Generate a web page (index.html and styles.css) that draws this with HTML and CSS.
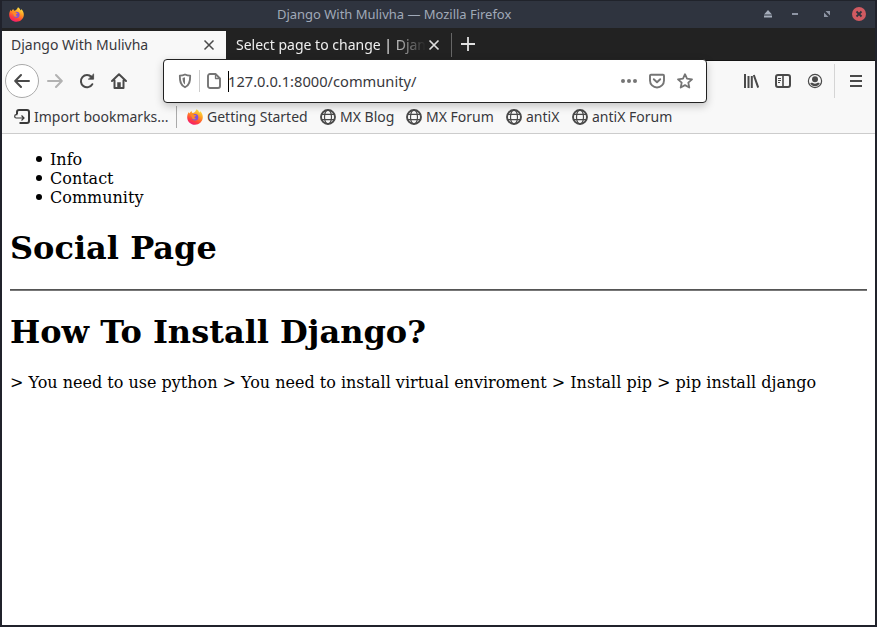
FILE: index.html
```
<!DOCTYPE html>
<html lang="en">
<head>
<meta charset="utf-8">
<title>Django With Mulivha</title>
<link rel="stylesheet" href="styles.css">
</head>
<body>
<svg class="defs" width="0" height="0">
  <defs>
    <linearGradient id="flame" x1="0.8" y1="0" x2="0.3" y2="1">
      <stop offset="0" stop-color="#fff04a"/><stop offset=".4" stop-color="#ff9a22"/><stop offset=".75" stop-color="#ff403c"/><stop offset="1" stop-color="#f01878"/>
    </linearGradient>
    <symbol id="firefox" viewBox="0 0 16 16">
      <path fill="url(#flame)" d="M9.6.3c1.700 1 2.300 2.100 2.600 3.200.8-.2.8-.9.700-1.500C14.900 3.500 16 6 15.800 8.600 15.500 12.800 12.200 15.800 8 15.800S.3 12.700.2 8.500C.1 6.300.9 4.200 2 3c0 .7.200 1.100.5 1.400.5-1 1.200-1.800 2.100-2.300 0 .9.400 1.600 1 2C8.300 3.600 8.800 1.700 9.600.3z"/>
      <circle cx="8" cy="8.300" r="3.300" fill="#8050dc"/>
      <path fill="#ff8b25" d="M3 5.400c1.700-.9 3.500-.5 4.600.6l1.700.3c-.2 1-1.600 1.100-1.900 1.900-.2.900.7 1.500 1.800 1-.8 1.800-4 1.500-4.400-.7C4.400 7.200 3.800 6 3 5.400z"/>
    </symbol>
    <symbol id="globe" viewBox="0 0 16 16">
      <g fill="none" stroke="#4a4a4a"><circle cx="8" cy="8" r="7" stroke-width="1.900"/><ellipse cx="8" cy="8" rx="3.500" ry="7" stroke-width="1.200"/><path stroke-width="1.200" d="M2 5.400h12M2 10.600h12"/></g>
    </symbol>
  </defs>
</svg>
<div class="window">
  <header class="titlebar">
    <svg class="logo" width="15" height="15"><use href="#firefox"/></svg>
    <span class="title">Django With Mulivha — Mozilla Firefox</span>
    <div class="controls">
      <svg width="10" height="8" viewBox="0 0 10 8" fill="#a6adbb"><path d="M5 0l4 4.500H1zM1 5.500h8v2H1z"/></svg>
      <svg width="8" height="8" viewBox="0 0 8 8" fill="#8e95a4"><path d="M1 3h6v2H1z"/></svg>
      <svg width="8" height="8" viewBox="0 0 8 8" fill="#8e95a4"><path d="M2.500 1H7v4.500zM1 2.500L5.500 7H1z"/></svg>
      <svg width="14" height="14" viewBox="0 0 14 14"><circle cx="7" cy="7" r="7" fill="#d05a61"/><path d="M4.500 4.500l5 5m0-5l-5 5" stroke="#2f343f" stroke-width="1.800"/></svg>
    </div>
  </header>
  <nav class="tabs">
    <div class="tab active"><span>Django With Mulivha</span>
      <svg width="12" height="12" viewBox="0 0 12 12"><path d="M1.500 1.500l9 9m0-9l-9 9" stroke="#4a4a4a" stroke-width="1.500"/></svg></div>
    <div class="tab"><span class="fade">Select page to change | Djan</span>
      <svg width="12" height="12" viewBox="0 0 12 12"><path d="M1.500 1.500l9 9m0-9l-9 9" stroke="#ddd" stroke-width="1.700"/></svg></div>
    <svg class="new" width="14" height="14" viewBox="0 0 14 14"><path d="M7 0v14M0 7h14" stroke="#e0e0e0" stroke-width="1.800"/></svg>
  </nav>
  <div class="toolbar">
    <div class="buttons">
      <span class="back"><svg width="16" height="16" viewBox="0 0 16 16" fill="none" stroke="#4a4a4a" stroke-width="2" stroke-linecap="round" stroke-linejoin="round"><path d="M15 8H1.500M7 2L1.200 8 7 14"/></svg></span>
      <svg width="16" height="16" viewBox="0 0 16 16" fill="none" stroke="#b2b2b2" stroke-width="2" stroke-linecap="round" stroke-linejoin="round"><path d="M1 8h13.500M9 2l5.800 6L9 14"/></svg>
      <svg width="16" height="16" viewBox="0 0 16 16" fill="none" stroke="#4a4a4a" stroke-width="2" stroke-linecap="round"><path d="M13.300 11.200A6.100 6.100 0 1 1 12.500 4"/><path d="M14.600 1.300v4.900H9.700z" fill="#4a4a4a" stroke-width=".8"/></svg>
      <svg width="16" height="16" viewBox="0 0 16 16" fill="none" stroke="#4a4a4a" stroke-width="2" stroke-linecap="round" stroke-linejoin="round"><path d="M1 8l7-6.800L15 8M3.500 7.500V15h9V7.500"/><path d="M6.500 15V9.500h3V15z" fill="#4a4a4a" stroke-width=".5"/></svg>
    </div>
    <div class="urlbar">
      <svg class="shield" width="14" height="16" viewBox="0 0 14 16"><path d="M7 1.500c1.600.8 3.500 1.200 5.200 1.200 0 5.300-.5 9.400-5.200 11.600C2.300 12.100 1.800 8 1.800 2.700 3.500 2.700 5.400 2.300 7 1.500z" fill="none" stroke="#757575" stroke-width="1.800" stroke-linejoin="round"/><path d="M7 4.300v7.200C5.200 10.200 4.700 8.300 4.500 5z" fill="#757575"/></svg>
      <i class="rule"></i>
      <svg class="page" width="14" height="16" viewBox="0 0 14 16" fill="none" stroke="#757575" stroke-width="1.900" stroke-linejoin="round"><path d="M3 1h5.500L13 5.500V13a2 2 0 0 1-2 2H3a2 2 0 0 1-2-2V3a2 2 0 0 1 2-2z"/><path d="M8.500 1v4.500H13" stroke-width="1.300"/></svg>
      <i class="caret"></i><span class="url">127.0.0.1:8000/community/</span>
      <div class="actions">
        <svg width="16" height="16" viewBox="0 0 16 16" fill="#757575"><circle cx="2" cy="8" r="2"/><circle cx="8" cy="8" r="2"/><circle cx="14" cy="8" r="2"/></svg>
        <svg width="16" height="16" viewBox="0 0 16 16" fill="none" stroke="#757575" stroke-width="1.900" stroke-linecap="round" stroke-linejoin="round"><path d="M2 1.700h12a1 1 0 0 1 1 1V7.500a7 7 0 0 1-14 0V2.700a1 1 0 0 1 1-1z"/><path d="M4.800 6.200L8 9.300l3.200-3.100"/></svg>
        <svg width="16" height="16" viewBox="0 0 16 16" fill="none" stroke="#757575" stroke-width="1.800" stroke-linejoin="round"><path d="M8 1.200l2 4.500 5 .6-3.700 3.300 1 4.900L8 12.100l-4.300 2.400 1-4.900L1 6.300l5-.6z"/></svg>
      </div>
    </div>
    <div class="tools">
      <svg width="16" height="16" viewBox="0 0 16 16" fill="none" stroke="#4a4a4a" stroke-width="2"><path d="M2 1v14M5.500 3v12M8.800 3v12M10.800 2l4.400 12.600"/></svg>
      <svg width="16" height="16" viewBox="0 0 16 16" fill="none" stroke="#4a4a4a" stroke-width="2"><rect x="1" y="2" width="14" height="12" rx="2"/><path d="M8 2v12" stroke-width="1.600"/><path d="M3 5.500h3M3 7.500h3M3 9.500h2" stroke-width="1"/></svg>
      <svg width="16" height="16" viewBox="0 0 16 16"><circle cx="8" cy="8" r="6.600" fill="none" stroke="#4a4a4a" stroke-width="1.200"/><circle cx="8" cy="6.200" r="3" fill="#4a4a4a"/><path d="M3.200 10.200c1.200-.6 2-.5 2.700-.1 1.300.7 2.900.7 4.200 0 .7-.4 1.500-.5 2.700.1a5.300 5.300 0 0 1-9.600 0z" fill="#4a4a4a"/></svg>
    </div>
    <i class="divider"></i>
    <svg class="menu" width="12" height="12" viewBox="0 0 12 12" stroke="#4a4a4a" stroke-width="2"><path d="M0 1h12M0 6h12M0 11h12"/></svg>
  </div>
  <div class="bookmarks">
    <span class="mark import"><svg width="16" height="16" viewBox="0 0 16 16" fill="none" stroke="#3a3a3a" stroke-width="2"><path d="M3 5V3a2 2 0 0 1 2-2h8a2 2 0 0 1 2 2v9a2 2 0 0 1-2 2H5.500"/><path d="M3.500 5.700H2.200A1.500 1.500 0 0 0 .7 7.200v.3A1.500 1.500 0 0 0 2.200 9h7.600M7.500 6.500L10 9l-2.500 2.500" stroke-width="1.200"/></svg>Import bookmarks...</span>
    <span class="mark m1"><svg width="16" height="16"><use href="#firefox"/></svg>Getting Started</span>
    <span class="mark m2"><svg width="16" height="16"><use href="#globe"/></svg>MX Blog</span>
    <span class="mark m3"><svg width="16" height="16"><use href="#globe"/></svg>MX Forum</span>
    <span class="mark m4"><svg width="16" height="16"><use href="#globe"/></svg>antiX</span>
    <span class="mark m5"><svg width="16" height="16"><use href="#globe"/></svg>antiX Forum</span>
  </div>
  <main class="page-content">
    <ul><li>Info</li><li>Contact</li><li>Community</li></ul>
    <h1>Social Page</h1>
    <hr>
    <h1>How To Install Django?</h1>
    <p>&gt; You need to use python &gt; You need to install virtual enviroment &gt; Install pip &gt; pip install django</p>
  </main>
</div>
</body>
</html>
```
FILE: styles.css
```
* { box-sizing: border-box; }
body { margin: 0; background: #20222b; font: 14px/20px "Noto Sans", sans-serif; color: #38383d; overflow: hidden; }
svg { display: block; flex: none; }
.defs { position: absolute; }
.window { height: 627px; padding: 0 2px 2px; display: grid; grid-template-rows: 28px 33px 41px 32px 1fr; white-space: nowrap; }
.titlebar { display: grid; grid-template-columns: 275px 1fr auto; align-items: center; background: #2f343f; border-top: 1px solid #20232b; color: #a0a9b8; font-size: 13px; }
.title { padding-bottom: 2px; letter-spacing: -.02px; }
.logo { margin: 0 0 1px 7px; }
.controls { display: flex; align-items: center; padding: 0 9px 1px 0; }
.controls svg:nth-child(2) { margin-left: 18px; }
.controls svg:nth-child(3) { margin-left: 24px; }
.controls svg:nth-child(4) { margin-left: 21px; }
.tabs { display: flex; background: #222; padding-top: 3px; border-bottom: 1px solid #141414; }
.tab { display: flex; align-items: center; justify-content: space-between; width: 225px; padding: 0 11px 2px 10px; color: #eee; }
.tab.active { width: 224px; height: 31px; padding: 0 11px 3px 9px; background: #f8f8f8; color: #38383d; }
.fade { width: 190px; -webkit-mask-image: linear-gradient(90deg, #000 152px, transparent 190px); mask-image: linear-gradient(90deg, #000 152px, transparent 190px); }
.tabs::after { content: ""; order: 1; width: 1px; height: 24px; margin-top: 2px; background: #666; }
.new { order: 2; margin: 6px 0 0 9px; }
.toolbar { display: flex; align-items: center; background: #f8f8f8; padding-bottom: 1px; }
.buttons { width: 161px; display: flex; align-items: center; gap: 16px; padding-left: 3px; }
.back { width: 34px; height: 34px; border: 1px solid #aaa; border-radius: 50%; background: #fff; display: grid; place-items: center; }
.back + svg { margin-left: -8px; }
.urlbar { width: 544px; height: 44px; display: flex; align-items: center; border: 1px solid #222; border-radius: 4px; background: #fff; box-shadow: 0 3px 8px rgba(0,0,0,.22); z-index: 1; padding: 0 13px 0 14px; }
.rule { width: 1px; height: 22px; background: #ccc; margin: 0 7px; }
.caret { width: 1px; height: 21px; background: #000; margin: 0 -1px 0 7px; }
.url { font-size: 14.67px; }
.actions { margin-left: auto; display: flex; gap: 12px; }
.tools { display: flex; gap: 16px; margin-left: 36px; }
.divider { width: 1px; height: 34px; background: #d5d5d5; margin-left: 11px; }
.menu { margin-left: 15px; }
.bookmarks { display: flex; align-items: center; background: #f8f8f8; border-bottom: 1px solid #ccc; padding: 0 0 1px 12px; }
.mark { display: flex; align-items: center; gap: 4px; }
.import { width: 163px; height: 22px; border-right: 1px solid #aaa; }
.m1 { width: 133px; margin-left: 10px; }
.m2 { width: 86px; }
.m3 { width: 100px; }
.m4 { width: 66px; }
.page-content { background: #fff; padding: 0 8px; color: #000; font: 16px/19px "DejaVu Serif", serif; }
ul { margin: 16px 0 22px; padding-left: 40px; list-style: none; }
li::before { content: ""; display: inline-block; width: 6px; height: 6px; border-radius: 50%; background: #000; margin: 0 12px 2px -18px; vertical-align: 1px; }
li { height: 19px; padding-left: 4px; }
li::before { margin-right: 8px; margin-left: -18px; }
h1 { font-size: 32px; line-height: 38px; margin: 22px 0; }
hr { height: 2px; border: 0; margin: 0 0 22px; background: #777; border-top: 1px solid #555; }
ul + h1 { margin-bottom: 22px; }
p { margin: 0; }
```
